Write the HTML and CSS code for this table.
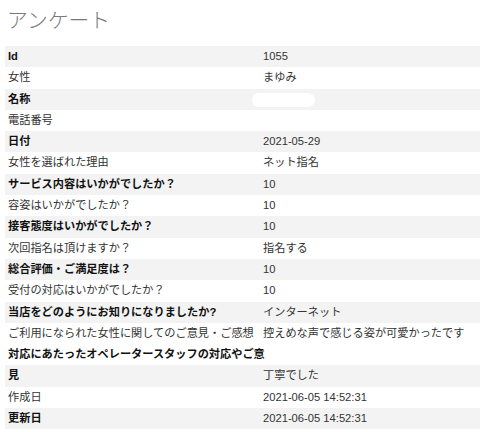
FILE: index.html
```html
<!DOCTYPE html>
<html lang="ja">
<head>
<meta charset="utf-8">
<title>アンケート</title>
<link rel="stylesheet" href="styles.css">
</head>
<body>
<div class="page">
  <h1 class="title">アンケート</h1>
  <div class="list">
    <div class="row"><div class="label">Id</div><div class="value">1055</div></div>
    <div class="row"><div class="label">女性</div><div class="value">まゆみ</div></div>
    <div class="row"><div class="label">名称</div><div class="value"><span class="mask"></span></div></div>
    <div class="row"><div class="label">電話番号</div><div class="value"></div></div>
    <div class="row"><div class="label">日付</div><div class="value">2021-05-29</div></div>
    <div class="row"><div class="label">女性を選ばれた理由</div><div class="value">ネット指名</div></div>
    <div class="row"><div class="label">サービス内容はいかがでしたか？</div><div class="value">10</div></div>
    <div class="row"><div class="label">容姿はいかがでしたか？</div><div class="value">10</div></div>
    <div class="row"><div class="label">接客態度はいかがでしたか？</div><div class="value">10</div></div>
    <div class="row"><div class="label">次回指名は頂けますか？</div><div class="value">指名する</div></div>
    <div class="row"><div class="label">総合評価・ご満足度は？</div><div class="value">10</div></div>
    <div class="row"><div class="label">受付の対応はいかがでしたか？</div><div class="value">10</div></div>
    <div class="row"><div class="label">当店をどのようにお知りになりましたか?</div><div class="value">インターネット</div></div>
    <div class="row"><div class="label">ご利用になられた女性に関してのご意見・ご感想</div><div class="value">控えめな声で感じる姿が可愛かったです</div></div>
    <div class="row tall"><div class="label">対応にあたったオペレータースタッフの対応やご意見</div><div class="value">丁寧でした</div></div>
    <div class="row"><div class="label">作成日</div><div class="value">2021-06-05 14:52:31</div></div>
    <div class="row"><div class="label">更新日</div><div class="value">2021-06-05 14:52:31</div></div>
  </div>
</div>
</body>
</html>
```
FILE: styles.css
```css
html, body {
  margin: 0;
  padding: 0;
  background: #fff;
}
body {
  font-family: "Liberation Sans", "Noto Sans CJK JP", sans-serif;
  font-size: 11.2px;
  color: #333;
}
.page {
  padding: 0 0 0 5px;
}
.title {
  margin: 5px 0 13px 2px;
  font-family: "Noto Sans CJK JP", sans-serif;
  font-size: 20.8px;
  line-height: 28px;
  font-weight: 300;
  color: #7a7a7a;
}
.list {
  display: flex;
  flex-direction: column;
}
.row {
  display: flex;
  height: 21.3px;
  line-height: 21.3px;
  background: #fff;
}
.row:nth-child(odd) {
  background: #f3f3f3;
}
.label {
  flex: 0 0 260px;
  padding: 0 0 0 3px;
  margin-right: -5px;
  color: #333;
  white-space: normal;
}
.row:nth-child(odd) .label {
  font-weight: 700;
  color: #111;
}
.value {
  flex: 1;
  white-space: nowrap;
  color: #333;
  position: relative;
}
.row.tall {
  margin-top: 21.3px;
}
.row.tall .label {
  align-self: flex-end;
}
.mask {
  display: inline-block;
  vertical-align: middle;
  width: 63px;
  height: 14px;
  margin-left: -11px;
  border-radius: 7px;
  background: #fff;
}
```
